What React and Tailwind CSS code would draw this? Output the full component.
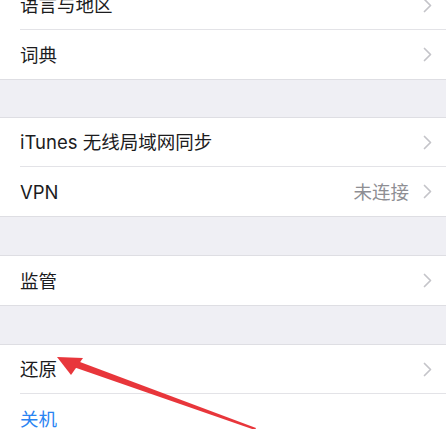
import React from "react";

const font = { fontFamily: 'Inter, "Noto Sans CJK SC", sans-serif' };

function Chevron() {
  return (
    <svg width="9" height="15" viewBox="0 0 9 15" className="shrink-0">
      <path d="M1.5 1.5 L7.5 7.5 L1.5 13.5" fill="none" stroke="#c4c4c9" strokeWidth="1.7" strokeLinecap="round" strokeLinejoin="round" />
    </svg>
  );
}

function Row({ label, value, last, blue, chevron = true }) {
  return (
    <div className="flex h-[49px] pl-5 bg-white">
      <div className={`flex flex-1 items-center pr-[14px] ${last ? "" : "border-b border-[#e3e3e7]"}`}>
        <span className={`flex-1 text-[18.5px] pt-[2px] ${blue ? "text-[#2a84f2]" : "text-[#1c1c1e]"}`}>{label}</span>
        {value && <span className="text-[18.5px] pt-[2px] text-[#8e8e93] mr-[14px]">{value}</span>}
        {chevron && <Chevron />}
      </div>
    </div>
  );
}

function Section({ children }) {
  return <div className="flex flex-col border-y border-[#dedee3]">{children}</div>;
}

export default function App() {
  return (
    <div className="relative w-[446px] h-[429px] overflow-hidden bg-[#efeff4]" style={font}>
      <div className="flex flex-col -mt-[20px]">
        <Section>
          <Row label="语言与地区" />
          <Row label="词典" last />
        </Section>
        <div className="h-[37px]" />
        <Section>
          <Row label="iTunes 无线局域网同步" />
          <Row label="VPN" value="未连接" last />
        </Section>
        <div className="h-[38px]" />
        <Section>
          <Row label="监管" last />
        </Section>
        <div className="h-[38px]" />
        <Section>
          <Row label="还原" />
          <Row label="关机" blue chevron={false} last />
        </Section>
      </div>
      <svg className="absolute inset-0 pointer-events-none" width="446" height="429" viewBox="0 0 446 429">
        <polygon points="57,357 83,358 71,375" fill="#e8363b" />
        <polygon points="76,360.5 73.5,367 255,430 256,428" fill="#e8363b" />
      </svg>
    </div>
  );
}
